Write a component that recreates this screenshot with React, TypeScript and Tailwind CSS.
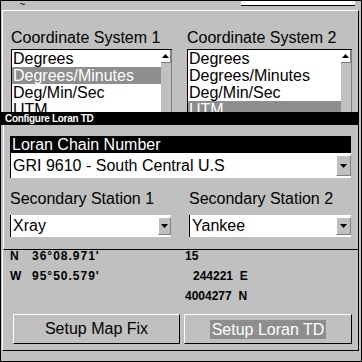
import React from "react";

function Tri({ up }: { up?: boolean }) {
    return (
        <svg width="7" height="4" viewBox="0 0 7 4">
            <path d={up ? "M3.5 0L7 4H0z" : "M0 0h7L3.5 4z"} fill="#000" />
        </svg>
    );
}

function ListBox({ items, selected }: { items: string[]; selected: number }) {
    return (
        <div className="h-[80px] flex bg-white border-l border-t border-black">
            <div className="flex-1">
                {items.map((it, i) => (
                    <div
                        key={it}
                        className={
                            "h-[17px] leading-[17px] pl-[1px] text-[16px] whitespace-nowrap " +
                            (i === selected ? "bg-[#8e8e8e] text-white" : "")
                        }
                    >
                        {it}
                    </div>
                ))}
            </div>
            <div className="w-[11px] bg-[#c0c0c0] border-r border-[#808080]">
                <div className="h-[13px] bg-white border-r border-b border-[#808080] flex items-center justify-center">
                    <Tri up />
                </div>
            </div>
        </div>
    );
}

function DropDown({ value, h, btn }: { value: string; h: string; btn: string }) {
    return (
        <div className={"flex items-center bg-white border-l border-black " + h}>
            <div className="flex-1 pl-[2px] text-[16px] leading-[18px] whitespace-nowrap">{value}</div>
            <div className={"self-stretch my-[2px] bg-[#c0c0c0] border-t border-l border-white border-r border-b border-r-[#808080] border-b-[#808080] flex items-center justify-center " + btn}>
                <Tri />
            </div>
        </div>
    );
}

export default function App() {
    const items = ["Degrees", "Degrees/Minutes", "Deg/Min/Sec", "UTM"];
    return (
        <div className="w-[362px] h-[362px] overflow-hidden relative bg-[#c0c0c0] border border-black font-['Liberation_Sans',Arial,sans-serif] text-black">
            {/* screen behind the dialogs */}
            <div className="h-[9px] flex">
                <div className="ml-[19px] text-[9px] leading-[6px] font-bold">~</div>
                <div className="ml-auto mr-[6px] w-[114px] h-[5px] bg-white border-b border-black" />
            </div>

            {/* coordinate system window */}
            <div className="ml-[1px] mr-[2px] h-[341px] border-t border-l border-white border-r border-b border-r-black border-b-black">
                <div className="flex pt-[18px] pl-[8px] gap-[15px]">
                    <div className="w-[161px]">
                        <div className="h-[18px] leading-[18px] text-[16px] mb-[2px] whitespace-nowrap">Coordinate System 1</div>
                        <ListBox items={items} selected={1} />
                    </div>
                    <div className="w-[165px]">
                        <div className="h-[18px] leading-[18px] text-[16px] mb-[2px] whitespace-nowrap">Coordinate System 2</div>
                        <ListBox items={items} selected={3} />
                    </div>
                </div>

                <div className="mt-[117px] pl-[7px] flex text-[12px] font-bold">
                    <div className="w-[175px]">
                        <div className="h-[20px] leading-[20px] flex">
                            <span className="w-[22px]">N</span>
                            <span className="tracking-[1px]">36°08.971'</span>
                        </div>
                        <div className="h-[20px] leading-[20px] flex">
                            <span className="w-[22px]">W</span>
                            <span className="tracking-[1px]">95°50.579'</span>
                        </div>
                    </div>
                    <div className="whitespace-pre">
                        <div className="h-[20px] leading-[20px]">15</div>
                        <div className="h-[20px] leading-[20px] pl-[8px]">244221  E</div>
                        <div className="h-[20px] leading-[20px]">4004277  N</div>
                    </div>
                </div>

                <div className="mt-[8px] pl-[10px] flex gap-[4px]">
                    <div className="w-[167px] h-[30px] border-t border-l border-white border-r border-b border-r-black border-b-black flex items-center justify-center text-[16px]">
                        Setup Map Fix
                    </div>
                    <div className="w-[168px] h-[30px] border-t border-l border-white border-r border-b border-r-black border-b-black flex items-center justify-center text-[16px]">
                        <span className="bg-[#8e8e8e] text-white px-[2px] leading-[19px]">Setup Loran TD</span>
                    </div>
                </div>
            </div>

            {/* Configure Loran TD dialog on top */}
            <div className="absolute left-0 top-[111px] w-[357px] bg-[#c0c0c0]">
                <div className="h-[13px] bg-black text-white text-[10px] font-bold leading-[13px] pl-[4px] tracking-[-0.3px]">
                    Configure Loran TD
                </div>
                <div className="h-[125px] ml-[2px] border-l border-white border-b border-b-black pl-[6px] pt-[11px]">
                    <div className="w-[341px]">
                        <div className="h-[17px] leading-[17px] bg-black text-white text-[16px] pl-[2px]">Loran Chain Number</div>
                        <DropDown value="GRI 9610 - South Central U.S" h="h-[25px]" btn="w-[15px]" />
                    </div>
                    <div className="flex gap-[18px] mt-[12px]">
                        <div className="w-[161px]">
                            <div className="h-[18px] leading-[18px] text-[16px] mb-[7px] whitespace-nowrap">Secondary Station 1</div>
                            <DropDown value="Xray" h="h-[22px]" btn="w-[13px]" />
                        </div>
                        <div className="w-[162px]">
                            <div className="h-[18px] leading-[18px] text-[16px] mb-[7px] whitespace-nowrap">Secondary Station 2</div>
                            <DropDown value="Yankee" h="h-[22px]" btn="w-[15px]" />
                        </div>
                    </div>
                </div>
            </div>
        </div>
    );
}
